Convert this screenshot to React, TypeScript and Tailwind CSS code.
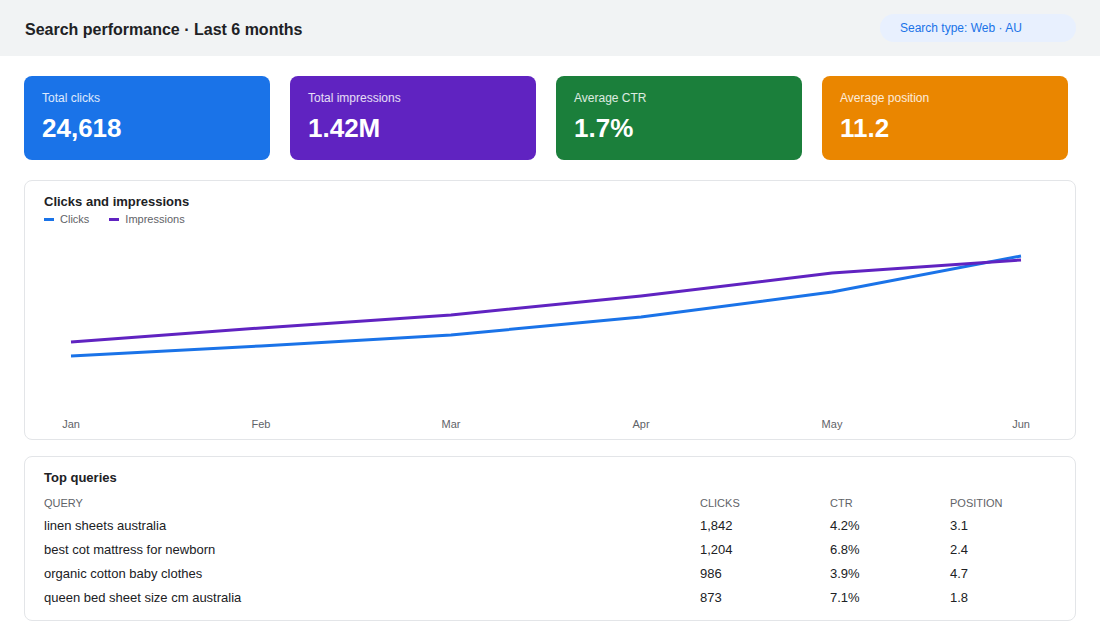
import React from "react";

const stats = [
  { label: "Total clicks", value: "24,618", bg: "bg-[#1a73e8]" },
  { label: "Total impressions", value: "1.42M", bg: "bg-[#6023c1]" },
  { label: "Average CTR", value: "1.7%", bg: "bg-[#1b7f3b]" },
  { label: "Average position", value: "11.2", bg: "bg-[#ea8600]" },
];

const months = ["Jan", "Feb", "Mar", "Apr", "May", "Jun"];
const xs = [27, 217, 407, 597, 788, 977];
const clicks = [130, 120, 109, 91, 66, 30];
const impressions = [116, 102, 89, 70, 47, 34];

const rows = [
  ["linen sheets australia", "1,842", "4.2%", "3.1"],
  ["best cot mattress for newborn", "1,204", "6.8%", "2.4"],
  ["organic cotton baby clothes", "986", "3.9%", "4.7"],
  ["queen bed sheet size cm australia", "873", "7.1%", "1.8"],
];

const pts = (ys: number[]) => ys.map((y, i) => `${xs[i]},${y}`).join(" ");

export default function App() {
  return (
    <div
      className="w-[1100px] h-[640px] bg-white text-[#202124] overflow-hidden"
      style={{ fontFamily: '"Liberation Sans", Arial, sans-serif' }}
    >
      <header className="h-14 bg-[#f1f3f4] flex items-center justify-between pl-[25px] pr-6">
        <h1 className="text-base font-bold mt-[3px]">Search performance · Last 6 months</h1>
        <div className="w-[196px] h-7 rounded-full bg-[#e8f0fe] text-[#1a73e8] text-xs flex items-center pl-5">
          Search type: Web · AU
        </div>
      </header>

      <div className="px-6 pt-5 flex flex-col">
        <div className="flex gap-5">
          {stats.map((s) => (
            <div key={s.label} className={`w-[246px] h-[84px] rounded-lg ${s.bg} text-white px-[18px] pt-[14px]`}>
              <div className="text-xs leading-4 text-white/85">{s.label}</div>
              <div className="mt-[6px] text-[26px] leading-8 font-bold">{s.value}</div>
            </div>
          ))}
        </div>

        <div className="mt-5 h-[260px] rounded-lg border border-[#e3e5e8] px-[19px] pt-[11px]">
          <div className="text-[13px] leading-5 font-bold">Clicks and impressions</div>
          <div className="flex items-center gap-5 text-[11px] leading-[14px] text-[#5f6368]">
            <div className="flex items-center gap-[6px]">
              <span className="w-[10px] h-[3px] bg-[#1a73e8]" />
              Clicks
            </div>
            <div className="flex items-center gap-[6px]">
              <span className="w-[10px] h-[3px] bg-[#6023c1]" />
              Impressions
            </div>
          </div>
          <svg width="1012" height="207" className="block" viewBox="0 0 1012 207">
            <polyline points={pts(clicks)} fill="none" stroke="#1a73e8" strokeWidth="3" strokeLinejoin="round" />
            <polyline points={pts(impressions)} fill="none" stroke="#6023c1" strokeWidth="3" strokeLinejoin="round" />
            {months.map((m, i) => (
              <text
                key={m}
                x={xs[i]}
                y={202}
                textAnchor="middle"
                fontSize="11"
                fill="#5f6368"
                fontFamily='"Liberation Sans", Arial, sans-serif'
              >
                {m}
              </text>
            ))}
          </svg>
        </div>

        <div className="mt-4 h-[165px] rounded-lg border border-[#e3e5e8] px-[19px] pt-[11px]">
          <div className="text-[13px] leading-5 font-bold">Top queries</div>
          <div className="mt-2 grid grid-cols-[656px_130px_120px_1fr]">
            {["Query", "Clicks", "CTR", "Position"].map((h) => (
              <div key={h} className="h-[18px] text-[11px] uppercase text-[#5f6368] leading-[14px]">
                {h}
              </div>
            ))}
            {rows.map((r) =>
              r.map((c, j) => (
                <div key={r[0] + j} className="h-6 text-[13px] leading-6">
                  {c}
                </div>
              ))
            )}
          </div>
        </div>
      </div>
    </div>
  );
}
